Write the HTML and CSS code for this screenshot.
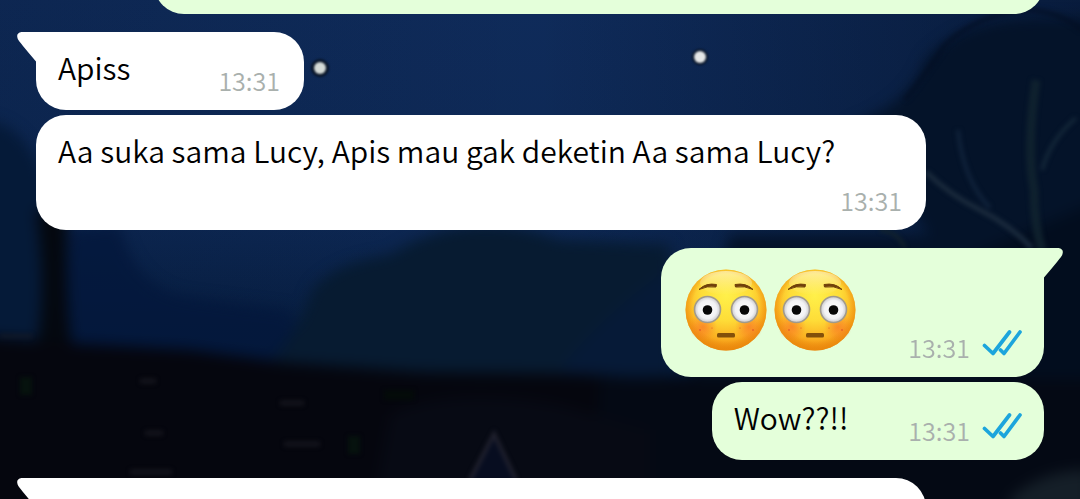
FILE: index.html
```html
<!DOCTYPE html>
<html lang="id">
<head>
<meta charset="utf-8">
<meta name="viewport" content="width=device-width, initial-scale=1">
<title>Chat</title>
<link rel="stylesheet" href="styles.css">
</head>
<body>
<svg class="wallpaper" viewBox="0 0 1080 499" preserveAspectRatio="xMidYMid slice" aria-hidden="true">
  <defs>
    <linearGradient id="sky" x1="0" y1="0" x2="0" y2="1">
      <stop offset="0" stop-color="#0f2b5a"/>
      <stop offset=".45" stop-color="#0d2854"/>
      <stop offset=".72" stop-color="#061c3d"/>
    </linearGradient>
    <linearGradient id="shade" x1="0" y1="0" x2="1" y2="0">
      <stop offset="0" stop-color="#020d20" stop-opacity=".15"/>
      <stop offset=".5" stop-color="#020d20" stop-opacity="0"/>
      <stop offset=".8" stop-color="#020d20" stop-opacity=".3"/>
      <stop offset="1" stop-color="#020d20" stop-opacity=".5"/>
    </linearGradient>
    <filter id="soft" x="-20%" y="-20%" width="140%" height="140%" color-interpolation-filters="sRGB"><feGaussianBlur stdDeviation="7"/></filter>
    <filter id="fine" x="-20%" y="-20%" width="140%" height="140%" color-interpolation-filters="sRGB"><feGaussianBlur stdDeviation="2"/></filter>
    <filter id="star" x="-20%" y="-20%" width="140%" height="140%" color-interpolation-filters="sRGB"><feGaussianBlur stdDeviation="1.200"/></filter>
  </defs>
  <rect width="1080" height="499" fill="url(#sky)"/>
  <rect width="1080" height="499" fill="url(#shade)"/>
  <g filter="url(#soft)">
    <path d="M-20 120 Q30 120 50 200 L60 360 H-20Z" fill="#051a38"/>
    <path d="M120 225 Q135 290 190 297 L290 310 Q300 350 340 370 L60 350 70 230Z" fill="#04183c" opacity=".85"/>
    <path d="M270 362 Q300 330 312 290 Q335 262 390 255 Q470 205 560 240 L670 245 V400 L280 375Z" fill="#071b31"/>
    <path d="M560 370 Q590 330 640 290 L680 260 V400Z" fill="#051a3a" opacity=".7"/>
    <path d="M36 210 H68 Q64 290 72 350 L36 350 Q48 290 36 210Z" fill="#04080f"/>
    <path d="M850 125 Q910 105 925 60 Q960 20 1030 18 L1100 18 V510 H650 L730 235 H930Z" fill="#041329"/>
    <path d="M960 260 L1100 200 V470 H1000Z" fill="#020d1c" opacity=".8"/>
    <path d="M-20 336 L80 344 190 350 280 362 420 372 580 374 720 384 V520 H-20Z" fill="#05060e"/>
    <path d="M600 378 L700 376 1100 380 V520 H590Z" fill="#040914"/>
    <path d="M390 415 Q450 385 560 405 L650 430 V520 H370Z" fill="#070a14"/>
    <path d="M1010 499 Q1040 470 1090 470 V510H1010Z" fill="#151f28"/>
  </g>
  <g filter="url(#fine)" fill="none">
    <path d="M905 100 Q925 75 945 45 Q980 12 1030 10 Q1060 12 1082 30" stroke="#030e22" stroke-width="5" opacity=".6"/>
    <path d="M926 172 Q950 195 980 210 Q1010 225 1032 248" stroke="#1a2a3c" stroke-width="5"/>
    <path d="M958 130 Q963 180 990 208" stroke="#10223a" stroke-width="4"/>
    <path d="M1036 80 Q1026 150 1034 190 Q1034 225 1042 250" stroke="#12242f" stroke-width="9" opacity=".8"/>
    <path d="M1042 170 Q1050 140 1076 118" stroke="#132638" stroke-width="4"/>
    <path d="M880 230 Q898 232 905 248" stroke="#14242b" stroke-width="3"/>
    <path d="M470 480 L494 434 516 480" stroke="#20212e" stroke-width="4" fill="#070d20"/>
    <path d="M140 381 h16 M145 433 h18 M280 403 h24 M284 444 h36 M130 472 h42" stroke="#14141c" stroke-width="5"/>
    <path d="M26 377 v18 M354 436 v18" stroke="#06120e" stroke-width="12"/>
    <path d="M0 336 h32" stroke="#151a27" stroke-width="3"/>
    <path d="M384 395 h30" stroke="#040b09" stroke-width="10"/>
  </g>
  <g filter="url(#star)">
    <circle cx="320" cy="68" r="9" fill="#081426"/><circle cx="320" cy="68" r="6" fill="#d4dad6"/>
    <circle cx="700" cy="57" r="8" fill="#081426"/><circle cx="700" cy="57" r="6" fill="#e4e6e6"/>
  </g>
</svg>

<svg class="symbols" aria-hidden="true">
  <defs>
    <radialGradient id="skin" cx=".5" cy=".32" r=".68">
      <stop offset="0" stop-color="#fff04a"/>
      <stop offset=".45" stop-color="#fedd38"/>
      <stop offset=".78" stop-color="#fbb021"/>
      <stop offset="1" stop-color="#ea820c"/>
    </radialGradient>
    <linearGradient id="gloss" x1="0" y1="0" x2="0" y2="1">
      <stop offset="0" stop-color="#fff" stop-opacity=".5"/>
      <stop offset="1" stop-color="#fff" stop-opacity="0"/>
    </linearGradient>
    <radialGradient id="rim" cx=".5" cy=".47" r=".53">
      <stop offset=".78" stop-color="#ea8a0c" stop-opacity="0"/>
      <stop offset="1" stop-color="#ea8a0c" stop-opacity=".75"/>
    </radialGradient>
    <radialGradient id="cheek">
      <stop offset="0" stop-color="#f9702a" stop-opacity=".65"/>
      <stop offset="1" stop-color="#f9702a" stop-opacity="0"/>
    </radialGradient>
    <radialGradient id="eye">
      <stop offset="0" stop-color="#fff"/>
      <stop offset=".7" stop-color="#f2f2f4"/>
      <stop offset="1" stop-color="#c9c9cd"/>
    </radialGradient>
    <symbol id="flushed" viewBox="0 0 82 82">
      <circle cx="41" cy="41" r="40.500" fill="url(#skin)"/>
      <circle cx="41" cy="41" r="40.500" fill="url(#rim)"/>
      <ellipse cx="41" cy="14" rx="26" ry="12" fill="url(#gloss)"/>
      <circle cx="18" cy="58" r="14" fill="url(#cheek)"/>
      <circle cx="64" cy="58" r="14" fill="url(#cheek)"/>
      <g fill="#d8472a"><circle cx="15" cy="61" r=".8"/><circle cx="27" cy="59" r=".5"/><circle cx="55" cy="59" r=".5"/><circle cx="68" cy="61" r=".8"/></g>
      <g fill="url(#eye)" stroke="#a19a8b" stroke-width="1.600"><circle cx="22.500" cy="40.500" r="13"/><circle cx="59.500" cy="40.500" r="13"/></g>
      <circle cx="22.500" cy="41" r="4.800" fill="#070707"/><circle cx="59.500" cy="41" r="4.800" fill="#070707"/>
      <path d="M14 20.500 Q21 13.500 31.500 15.500 L31 18 Q22 16.500 14 20.500Z M68 20.500 Q61 13.500 50 15.500 L50.500 18 Q60 16.500 68 20.500Z" fill="#70400a" stroke="#70400a" stroke-width="1" stroke-linejoin="round"/>
      <rect x="32" y="64" width="18" height="4.500" rx="1.500" fill="#83500a"/>
    </symbol>
    <symbol id="read" viewBox="0 0 40 26">
      <g fill="none" stroke="#1ca5dc" stroke-width="3.700" stroke-linecap="round" stroke-linejoin="round">
        <path d="M2.500 15.500 L11 23.500 27.500 2"/>
        <path d="M18.500 20 L22 23.500 38 2"/>
      </g>
    </symbol>
    <symbol id="tail" viewBox="0 0 40 32">
      <path d="M40 0 H4.500 Q-1.500 1 .8 7 Q1.500 9 19 29.500 H40Z"/>
    </symbol>
  </defs>
</svg>

<main class="chat">
  <article class="bubble sent earlier"></article>

  <article class="bubble received first">
    <svg class="tail" aria-hidden="true"><use href="#tail"/></svg>
    <p class="text">Apiss</p>
    <div class="meta"><time>13:31</time></div>
  </article>

  <article class="bubble received long">
    <p class="text">Aa suka sama Lucy, Apis mau gak deketin Aa sama Lucy?</p>
    <div class="meta"><time>13:31</time></div>
  </article>

  <article class="bubble sent first">
    <svg class="tail" aria-hidden="true"><use href="#tail"/></svg>
    <div class="emojis" role="img" aria-label="Wajah tersipu, wajah tersipu">
      <svg class="emoji"><use href="#flushed"/></svg>
      <svg class="emoji"><use href="#flushed"/></svg>
    </div>
    <div class="meta"><time>13:31</time><svg class="ticks" role="img" aria-label="Dibaca"><use href="#read"/></svg></div>
  </article>

  <article class="bubble sent">
    <p class="text">Wow??!!</p>
    <div class="meta"><time>13:31</time><svg class="ticks" role="img" aria-label="Dibaca"><use href="#read"/></svg></div>
  </article>

  <article class="bubble received first later">
    <svg class="tail" aria-hidden="true"><use href="#tail"/></svg>
  </article>
</main>
</body>
</html>
```
FILE: styles.css
```css
* { box-sizing: border-box; }

body {
  margin: 0;
  background: #05060e;
  font-family: "Noto Sans CJK SC", "Noto Sans", sans-serif;
}

.wallpaper {
  position: fixed;
  inset: 0;
  width: 100%;
  height: 100%;
}

.symbols {
  position: absolute;
  width: 0;
  height: 0;
}

.chat {
  position: relative;
  display: flex;
  flex-direction: column;
  gap: 5px;
  height: 100vh;
  padding: 0 36px;
  overflow: hidden;
}

.bubble {
  position: relative;
  display: flex;
  flex-shrink: 0;
  align-items: flex-end;
  max-width: 890px;
  padding: 12px 22px;
  border-radius: 30px;
}

.received {
  align-self: flex-start;
  padding-right: 24px;
  background: #fff;
  color: #fff;
}

.sent {
  align-self: flex-end;
  background: #e4ffda;
  color: #e4ffda;
}

.first { margin-top: 13px; }
.received.first { border-top-left-radius: 0; }
.sent.first { border-top-right-radius: 0; }

.tail {
  position: absolute;
  top: 0;
  left: -19px;
  width: 40px;
  height: 32px;
  fill: currentColor;
}

.sent .tail {
  right: -19px;
  left: auto;
  transform: scaleX(-1);
}

.text {
  margin: 0;
  padding: 0 8px 8px 0;
  color: #000;
  font-size: 30px;
  font-weight: 350;
  line-height: 46px;
}

.meta {
  display: flex;
  align-items: center;
  gap: 12px;
  margin-left: auto;
  padding-left: 52px;
  color: #a9b0ad;
  font-size: 25px;
  font-weight: 350;
  line-height: 36px;
}

.received .meta { padding-left: 80px; }

.ticks {
  width: 40px;
  height: 26px;
  margin-bottom: 8px;
}

.long {
  flex-direction: column;
  width: 100%;
}

.long .text {
  align-self: flex-start;
  padding: 0;
}

.long .meta { padding: 9px 0 0; }

.emojis {
  display: flex;
  gap: 7px;
  padding: 9px 0 14px 2px;
}

.emoji {
  width: 82px;
  height: 82px;
}

.earlier {
  width: 100%;
  height: 64px;
  margin-top: -50px;
}

.later {
  width: 100%;
  height: 80px;
}
```
